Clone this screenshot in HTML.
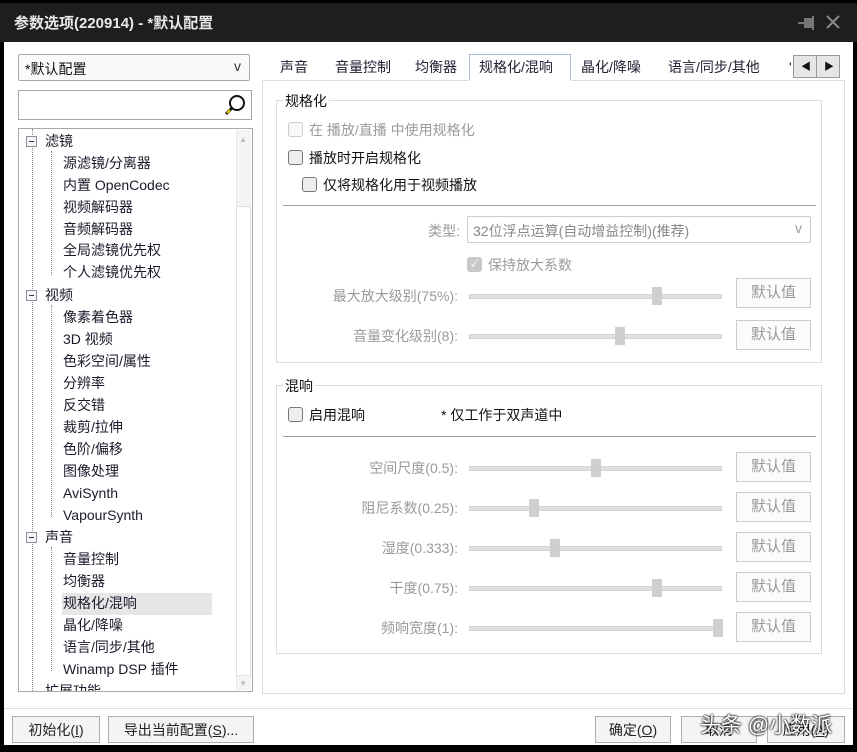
<!DOCTYPE html>
<html><head><meta charset="utf-8"><style>
*{box-sizing:border-box;margin:0;padding:0}
body{width:857px;height:752px;background:#000;position:relative;overflow:hidden;font-family:"Liberation Sans","Noto Sans CJK SC",sans-serif;font-size:14px;color:#111}
.a{position:absolute}
#title{left:0;top:3px;width:857px;height:39px;background:#1e1e1e;color:#e8e8e8;font-size:15px;font-weight:bold;padding:9px 0 0 14px}
#body{left:4px;top:42px;width:849px;height:703px;background:#fff}
.box{border:1px solid #a9a9a9;background:#fff}
.btn{border:1px solid #adadad;background:#f4f4f4;text-align:center;line-height:26px;font-size:14px;color:#222}
.tr{position:absolute;white-space:nowrap;font-size:14px;line-height:22px;color:#1a1a2a}
.g{color:#9a9a9a}
.grp{border:1px solid #dcdcdc}
.leg{position:absolute;background:#fff;padding:0 2px;font-size:14px}
.cb{position:absolute;width:15px;height:15px;border:1px solid #777;border-radius:3px;background:#eee}
.sl{position:absolute;height:5px;background:#e0e0e0;border:1px solid #d4d4d4}
.th{position:absolute;width:10px;height:18px;background:#cfcfcf}
.dbtn{position:absolute;width:75px;height:30px;border:1px solid #ccc;background:#fbfbfb;color:#999;text-align:center;line-height:28px;font-size:15px}
.lab{position:absolute;text-align:right;color:#9a9a9a;font-size:14px;width:200px}
.tab{position:absolute;top:54px;font-size:14px;color:#223;line-height:26px}
.ex{position:absolute;width:11px;height:11px;border:1px solid #8a8fa0;background:#f6f6f6}
.ex:after{content:"";position:absolute;left:2px;top:4px;width:5px;height:1px;background:#333}
</style></head><body>
<div id="title" class="a">参数选项(220914) - *默认配置
<svg class="a" style="left:798px;top:13px" width="18" height="14"><rect x="6" y="2" width="9" height="10" fill="#777"/><rect x="0" y="6" width="8" height="2" fill="#777"/><rect x="14" y="0" width="2" height="14" fill="#777"/></svg>
<svg class="a" style="left:826px;top:12px" width="14" height="14"><path d="M1 1L13 13M13 1L1 13" stroke="#888" stroke-width="2"/></svg></div>
<div id="body" class="a"></div>

<div class="a box" style="left:18px;top:54px;width:232px;height:27px;border-radius:2px;background:#fafafa;padding:4px 6px;font-size:14px">*默认配置<span class="a" style="right:8px;top:3px;color:#333">v</span></div>
<div class="a box" style="left:18px;top:90px;width:234px;height:30px"><svg class="a" style="right:4px;top:2px" width="24" height="24"><circle cx="14" cy="10" r="7" fill="none" stroke="#111" stroke-width="2"/><line x1="9" y1="15" x2="3" y2="21" stroke="#111" stroke-width="3"/><line x1="7" y1="17" x2="4" y2="20" stroke="#e6c800" stroke-width="2"/></svg></div>

<div class="a box" style="left:18px;top:128px;width:235px;height:564px;overflow:hidden">
<div class="a" style="right:1px;top:1px;width:15px;height:560px;background:#f4f4f4;border-left:1px solid #e6e6e6"></div>
<div class="a" style="right:1px;top:77px;width:15px;height:470px;background:#fff;border:1px solid #e0e0e0"></div>
<div class="a" style="right:5px;top:6px;color:#bbb;font-size:8px">▲</div>
<div class="a" style="right:5px;top:550px;color:#bbb;font-size:8px">▼</div>
<div class="a" style="left:13px;top:0;height:564px;border-left:1px dotted #888"></div>
<div class="a" style="left:32px;top:22px;height:124px;border-left:1px dotted #888"></div>
<div class="a" style="left:32px;top:176px;height:212px;border-left:1px dotted #888"></div>
<div class="a" style="left:32px;top:418px;height:124px;border-left:1px dotted #888"></div>
<div class="a" style="left:43px;top:464px;width:150px;height:22px;background:#e6e6e6"></div>
</div>
<div class="a" style="left:18px;top:128px">
<div class="ex" style="left:8px;top:8px"></div><div class="tr" style="left:27px;top:2px">滤镜</div>
<div class="tr" style="left:45px;top:24px">源滤镜/分离器</div>
<div class="tr" style="left:45px;top:46px">内置 OpenCodec</div>
<div class="tr" style="left:45px;top:68px">视频解码器</div>
<div class="tr" style="left:45px;top:90px">音频解码器</div>
<div class="tr" style="left:45px;top:111px">全局滤镜优先权</div>
<div class="tr" style="left:45px;top:133px">个人滤镜优先权</div>
<div class="ex" style="left:8px;top:162px"></div><div class="tr" style="left:27px;top:156px">视频</div>
<div class="tr" style="left:45px;top:178px">像素着色器</div>
<div class="tr" style="left:45px;top:200px">3D 视频</div>
<div class="tr" style="left:45px;top:222px">色彩空间/属性</div>
<div class="tr" style="left:45px;top:244px">分辨率</div>
<div class="tr" style="left:45px;top:266px">反交错</div>
<div class="tr" style="left:45px;top:288px">裁剪/拉伸</div>
<div class="tr" style="left:45px;top:310px">色阶/偏移</div>
<div class="tr" style="left:45px;top:332px">图像处理</div>
<div class="tr" style="left:45px;top:354px">AviSynth</div>
<div class="tr" style="left:45px;top:376px">VapourSynth</div>
<div class="ex" style="left:8px;top:404px"></div><div class="tr" style="left:27px;top:398px">声音</div>
<div class="tr" style="left:45px;top:420px">音量控制</div>
<div class="tr" style="left:45px;top:442px">均衡器</div>
<div class="tr" style="left:45px;top:464px">规格化/混响</div>
<div class="tr" style="left:45px;top:486px">晶化/降噪</div>
<div class="tr" style="left:45px;top:508px">语言/同步/其他</div>
<div class="tr" style="left:45px;top:530px">Winamp DSP 插件</div>
<div class="tr" style="left:27px;top:552px;height:11px;overflow:hidden">扩展功能</div>
</div>

<!-- tabs -->
<div class="tab" style="left:280px">声音</div>
<div class="tab" style="left:335px">音量控制</div>
<div class="tab" style="left:415px">均衡器</div>
<div class="a" style="left:469px;top:54px;width:102px;height:28px;border:1px solid #a9b8d8;border-bottom:none;background:#fff"></div>
<div class="tab" style="left:479px">规格化/混响</div>
<div class="tab" style="left:581px">晶化/降噪</div>
<div class="tab" style="left:668px">语言/同步/其他</div>
<div class="tab" style="left:789px">'</div>
<div class="a" style="left:793px;top:55px;width:47px;height:23px;border:1px solid #999;background:#e6e6e6"></div>
<div class="a" style="left:816px;top:55px;width:1px;height:23px;background:#999"></div>
<div class="a" style="left:801px;top:58px;font-size:10px">◀</div>
<div class="a" style="left:824px;top:58px;font-size:10px">▶</div>
<div class="a" style="left:262px;top:80px;width:583px;height:614px;border:1px solid #dcdcdc;background:#fff"></div>
<div class="a" style="left:469px;top:80px;width:102px;height:2px;background:#fff"></div>

<!-- group 1 -->
<div class="a grp" style="left:276px;top:100px;width:546px;height:263px"></div>
<div class="leg" style="left:283px;top:91px">规格化</div>
<div class="cb" style="left:288px;top:122px;border-color:#ccc;background:#f8f8f8"></div><div class="a g" style="left:309px;top:120px">在 播放/直播 中使用规格化</div>
<div class="cb" style="left:288px;top:150px"></div><div class="a" style="left:309px;top:148px">播放时开启规格化</div>
<div class="cb" style="left:302px;top:177px"></div><div class="a" style="left:323px;top:175px">仅将规格化用于视频播放</div>
<div class="a" style="left:283px;top:205px;width:533px;height:1px;background:#a0a0a0"></div>
<div class="lab" style="left:260px;top:221px">类型:</div>
<div class="a" style="left:467px;top:216px;width:344px;height:27px;border:1px solid #ccc;border-radius:2px;padding:4px 5px;color:#888;font-size:14px">32位浮点运算(自动增益控制)(推荐)<span class="a" style="right:8px;top:3px;color:#999">v</span></div>
<div class="a" style="left:467px;top:257px;width:15px;height:15px;border-radius:3px;background:#c8c8c8;color:#fff;font-size:10px;text-align:center;line-height:15px">✓</div>
<div class="a g" style="left:488px;top:255px">保持放大系数</div>
<div class="lab" style="left:258px;top:286px">最大放大级别(75%):</div>
<div class="sl" style="left:469px;top:294px;width:253px"></div><div class="th" style="left:652px;top:287px"></div>
<div class="dbtn" style="left:736px;top:278px">默认值</div>
<div class="lab" style="left:258px;top:326px">音量变化级别(8):</div>
<div class="sl" style="left:469px;top:334px;width:253px"></div><div class="th" style="left:615px;top:327px"></div>
<div class="dbtn" style="left:736px;top:320px">默认值</div>

<!-- group 2 -->
<div class="a grp" style="left:276px;top:385px;width:546px;height:269px"></div>
<div class="leg" style="left:283px;top:376px">混响</div>
<div class="cb" style="left:288px;top:407px"></div><div class="a" style="left:309px;top:405px">启用混响</div>
<div class="a" style="left:441px;top:405px">* 仅工作于双声道中</div>
<div class="a" style="left:283px;top:436px;width:533px;height:1px;background:#a0a0a0"></div>
<div class="lab" style="left:258px;top:458px">空间尺度(0.5):</div>
<div class="sl" style="left:469px;top:466px;width:253px"></div><div class="th" style="left:591px;top:459px"></div>
<div class="dbtn" style="left:736px;top:452px">默认值</div>
<div class="lab" style="left:258px;top:498px">阻尼系数(0.25):</div>
<div class="sl" style="left:469px;top:506px;width:253px"></div><div class="th" style="left:529px;top:499px"></div>
<div class="dbtn" style="left:736px;top:492px">默认值</div>
<div class="lab" style="left:258px;top:538px">湿度(0.333):</div>
<div class="sl" style="left:469px;top:546px;width:253px"></div><div class="th" style="left:550px;top:539px"></div>
<div class="dbtn" style="left:736px;top:532px">默认值</div>
<div class="lab" style="left:258px;top:578px">干度(0.75):</div>
<div class="sl" style="left:469px;top:586px;width:253px"></div><div class="th" style="left:652px;top:579px"></div>
<div class="dbtn" style="left:736px;top:572px">默认值</div>
<div class="lab" style="left:258px;top:618px">频响宽度(1):</div>
<div class="sl" style="left:469px;top:626px;width:253px"></div><div class="th" style="left:713px;top:619px"></div>
<div class="dbtn" style="left:736px;top:612px">默认值</div>

<!-- bottom -->
<div class="a" style="left:4px;top:708px;width:849px;height:1px;background:#e0e0e0"></div>
<div class="a btn" style="left:12px;top:716px;width:88px;height:27px">初始化(<u>I</u>)</div>
<div class="a btn" style="left:108px;top:716px;width:146px;height:27px">导出当前配置(<u>S</u>)...</div>
<div class="a btn" style="left:595px;top:716px;width:76px;height:27px">确定(<u>O</u>)</div>
<div class="a btn" style="left:681px;top:716px;width:76px;height:27px">取消</div>
<div class="a btn" style="left:767px;top:716px;width:78px;height:27px">应用(<u>A</u>)</div>
<div class="a" style="left:700px;top:709px;font-size:21px;color:#fff;text-shadow:0 0 2px #000,0 0 2px #000">头条 @小数派</div>
</body></html>
